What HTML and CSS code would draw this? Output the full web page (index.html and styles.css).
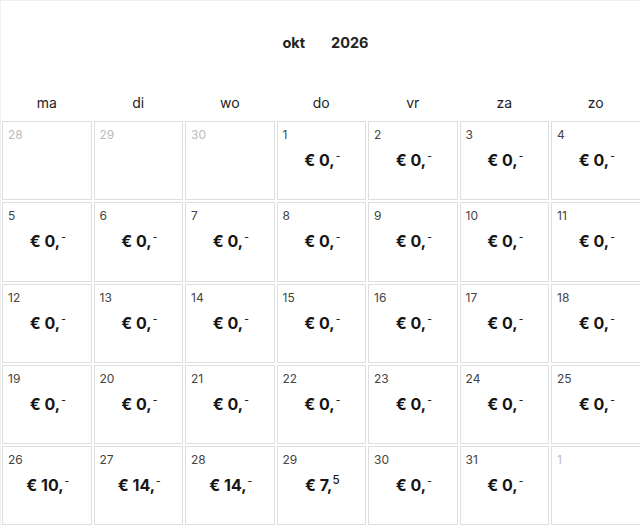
FILE: index.html
```html
<!DOCTYPE html>
<html lang="nl">
<head>
<meta charset="utf-8">
<title>Kalender</title>
<link rel="stylesheet" href="styles.css">
</head>
<body>
<div class="calendar">
  <div class="title">
    <span class="month">okt</span>
    <span class="year">2026</span>
  </div>
  <div class="weekdays">
    <div>ma</div><div>di</div><div>wo</div><div>do</div><div>vr</div><div>za</div><div>zo</div>
  </div>
  <div class="grid">
    <div class="cell other"><span class="num">28</span></div>
    <div class="cell other"><span class="num">29</span></div>
    <div class="cell other"><span class="num">30</span></div>
    <div class="cell"><span class="num">1</span><span class="price">€ 0,<sup>-</sup></span></div>
    <div class="cell"><span class="num">2</span><span class="price">€ 0,<sup>-</sup></span></div>
    <div class="cell"><span class="num">3</span><span class="price">€ 0,<sup>-</sup></span></div>
    <div class="cell"><span class="num">4</span><span class="price">€ 0,<sup>-</sup></span></div>

    <div class="cell"><span class="num">5</span><span class="price">€ 0,<sup>-</sup></span></div>
    <div class="cell"><span class="num">6</span><span class="price">€ 0,<sup>-</sup></span></div>
    <div class="cell"><span class="num">7</span><span class="price">€ 0,<sup>-</sup></span></div>
    <div class="cell"><span class="num">8</span><span class="price">€ 0,<sup>-</sup></span></div>
    <div class="cell"><span class="num">9</span><span class="price">€ 0,<sup>-</sup></span></div>
    <div class="cell"><span class="num">10</span><span class="price">€ 0,<sup>-</sup></span></div>
    <div class="cell"><span class="num">11</span><span class="price">€ 0,<sup>-</sup></span></div>

    <div class="cell"><span class="num">12</span><span class="price">€ 0,<sup>-</sup></span></div>
    <div class="cell"><span class="num">13</span><span class="price">€ 0,<sup>-</sup></span></div>
    <div class="cell"><span class="num">14</span><span class="price">€ 0,<sup>-</sup></span></div>
    <div class="cell"><span class="num">15</span><span class="price">€ 0,<sup>-</sup></span></div>
    <div class="cell"><span class="num">16</span><span class="price">€ 0,<sup>-</sup></span></div>
    <div class="cell"><span class="num">17</span><span class="price">€ 0,<sup>-</sup></span></div>
    <div class="cell"><span class="num">18</span><span class="price">€ 0,<sup>-</sup></span></div>

    <div class="cell"><span class="num">19</span><span class="price">€ 0,<sup>-</sup></span></div>
    <div class="cell"><span class="num">20</span><span class="price">€ 0,<sup>-</sup></span></div>
    <div class="cell"><span class="num">21</span><span class="price">€ 0,<sup>-</sup></span></div>
    <div class="cell"><span class="num">22</span><span class="price">€ 0,<sup>-</sup></span></div>
    <div class="cell"><span class="num">23</span><span class="price">€ 0,<sup>-</sup></span></div>
    <div class="cell"><span class="num">24</span><span class="price">€ 0,<sup>-</sup></span></div>
    <div class="cell"><span class="num">25</span><span class="price">€ 0,<sup>-</sup></span></div>

    <div class="cell"><span class="num">26</span><span class="price">€ 10,<sup>-</sup></span></div>
    <div class="cell"><span class="num">27</span><span class="price">€ 14,<sup>-</sup></span></div>
    <div class="cell"><span class="num">28</span><span class="price">€ 14,<sup>-</sup></span></div>
    <div class="cell"><span class="num">29</span><span class="price">€ 7,<sup class="cents">5</sup></span></div>
    <div class="cell"><span class="num">30</span><span class="price">€ 0,<sup>-</sup></span></div>
    <div class="cell"><span class="num">31</span><span class="price">€ 0,<sup>-</sup></span></div>
    <div class="cell other"><span class="num">1</span></div>
  </div>
</div>
</body>
</html>
```
FILE: styles.css
```css
html, body {
  margin: 0;
  padding: 0;
  background: #fff;
  overflow: hidden;
}

body {
  font-family: Inter, "Noto Sans", sans-serif;
  color: #222;
}

.calendar {
  width: 660px;
  border: 1px solid #f0f0f0;
  border-right: none;
  box-sizing: border-box;
}

.title {
  height: 84px;
  display: flex;
  justify-content: center;
  align-items: center;
  gap: 26px;
  padding-right: 10px;
  box-sizing: border-box;
  font-size: 14.5px;
  font-weight: 700;
  color: #222;
  padding-bottom: 2px;
}

.weekdays {
  display: grid;
  grid-template-columns: repeat(7, 89.5px);
  column-gap: 2px;
  padding-left: 1px;
  height: 34px;
  line-height: 34px;
  padding-top: 1px;
  font-size: 14px;
  color: #1e1e1e;
  text-align: center;
}

.grid {
  display: grid;
  grid-template-columns: repeat(7, 89.5px);
  grid-auto-rows: 79.3px;
  gap: 2px;
  padding-left: 1px;
  margin-top: 1px;
}

.cell {
  border: 1px solid #dedede;
  box-sizing: border-box;
  display: flex;
  flex-direction: column;
  padding: 5px 5px 0 5px;
}

.num {
  font-size: 12px;
  line-height: 15px;
  color: #444;
}

.other .num {
  color: #bbb;
}

.price {
  margin-top: 8px;
  text-align: center;
  font-size: 16px;
  line-height: 20px;
  font-weight: 700;
  color: #161616;
  padding-left: 2px;
}

.price sup {
  font-size: 10px;
  font-weight: 500;
  line-height: 0;
  vertical-align: 6px;
  margin-left: 1px;
}

.price sup.cents {
  font-size: 11.5px;
  vertical-align: 7px;
  margin-left: 0;
}
```
